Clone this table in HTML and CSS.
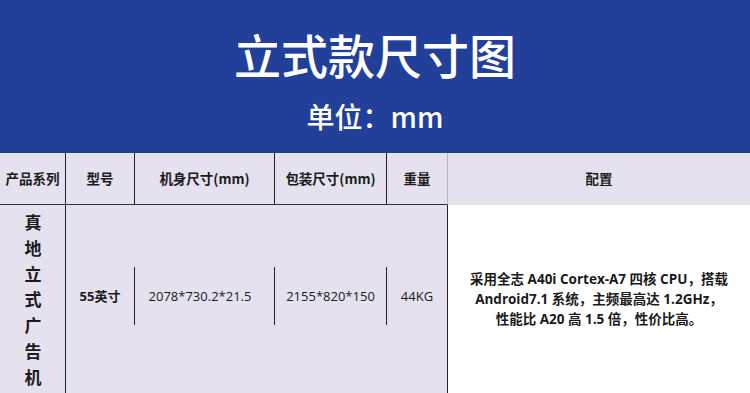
FILE: index.html
```html
<!DOCTYPE html>
<html lang="zh">
<head>
<meta charset="utf-8">
<link rel="stylesheet" href="styles.css">
</head>
<body>
<header class="banner">
  <h1 class="title">立式款尺寸图</h1>
  <div class="unit">单位：mm</div>
</header>
<section class="spec">
  <div class="hcell">产品系列</div>
  <div class="hcell">型号</div>
  <div class="hcell">机身尺寸(mm)</div>
  <div class="hcell">包装尺寸(mm)</div>
  <div class="hcell hcell-last">重量</div>
  <div class="hcell hcell-conf">配置</div>

  <div class="series">真<br>地<br>立<br>式<br>广<br>告<br>机</div>
  <div class="bcell"><span class="val val-line val-bold">55英寸</span></div>
  <div class="bcell"><span class="val val-line val-shift">2078*730.2*21.5</span></div>
  <div class="bcell"><span class="val val-line">2155*820*150</span></div>
  <div class="bcell bcell-last"><span class="val">44KG</span></div>
  <div class="conf">
    <span class="line">采用全志 A40i Cortex-A7 四核 CPU，搭载</span>
    <span class="line">Android7.1 系统，主频最高达 1.2GHz，</span>
    <span class="line">性能比 A20 高 1.5 倍，性价比高。</span>
  </div>
</section>
</body>
</html>
```

FILE: styles.css
```css
html, body {
  margin: 0;
  padding: 0;
  background: #ffffff;
}
body {
  width: 750px;
  height: 393px;
  overflow: hidden;
  font-family: "Open Sans", "Noto Sans CJK SC", sans-serif;
  color: #1b1b1b;
}
.banner {
  height: 153px;
  background: #22409a;
  color: #ffffff;
  display: flex;
  flex-direction: column;
  align-items: center;
  font-family: "Noto Sans CJK SC", sans-serif;
}
.title {
  margin: 21px 0 0 0;
  font-size: 47px;
  line-height: 66px;
  font-weight: 500;
  letter-spacing: 0;
}
.unit {
  margin-top: 9px;
  font-size: 28px;
  line-height: 40px;
  font-weight: 500;
}
.spec {
  display: grid;
  grid-template-columns: 66px 69px 140px 112px 61px 302px;
  grid-template-rows: 52px 188px;
}
.hcell {
  background: #e5e1ee;
  border-right: 1px solid #222;
  border-bottom: 1px solid #333;
  display: flex;
  align-items: center;
  justify-content: center;
  font-weight: 700;
  font-size: 13.5px;
  font-family: "Noto Sans CJK SC", sans-serif;
  padding-bottom: 1px;
}
.hcell-last {
  border-right: 1px solid #b8b6bc;
}
.hcell-conf {
  border-right: none;
  border-bottom: none;
  padding-bottom: 3px;
}
.series {
  background: #e5e1ee;
  border-right: 1px solid #222;
  text-align: center;
  font-family: "Noto Sans CJK SC", sans-serif;
  font-weight: 700;
  font-size: 17px;
  line-height: 25.8px;
  padding-top: 4px;
  padding-left: 1px;
}
.bcell {
  background: #e5e1ee;
  display: flex;
  align-items: center;
  padding-bottom: 6px;
}
.bcell-last {
  border-right: 1px solid #222;
}
.val {
  flex: 1;
  height: 58px;
  display: flex;
  align-items: center;
  justify-content: center;
  font-size: 13px;
  padding-bottom: 1px;
  box-sizing: border-box;
}
.val-shift {
  padding-right: 9px;
}
.val-line {
  border-right: 1px solid #222;
}
.val-bold {
  font-weight: 700;
  font-family: "Open Sans", "Noto Sans CJK SC", sans-serif;
}
.conf {
  background: #ffffff;
  display: flex;
  flex-direction: column;
  align-items: center;
  justify-content: center;
  padding-bottom: 1px;
  font-size: 13.5px;
  line-height: 20px;
  font-weight: 700;
}
.line {
  display: block;
  white-space: nowrap;
}
```
